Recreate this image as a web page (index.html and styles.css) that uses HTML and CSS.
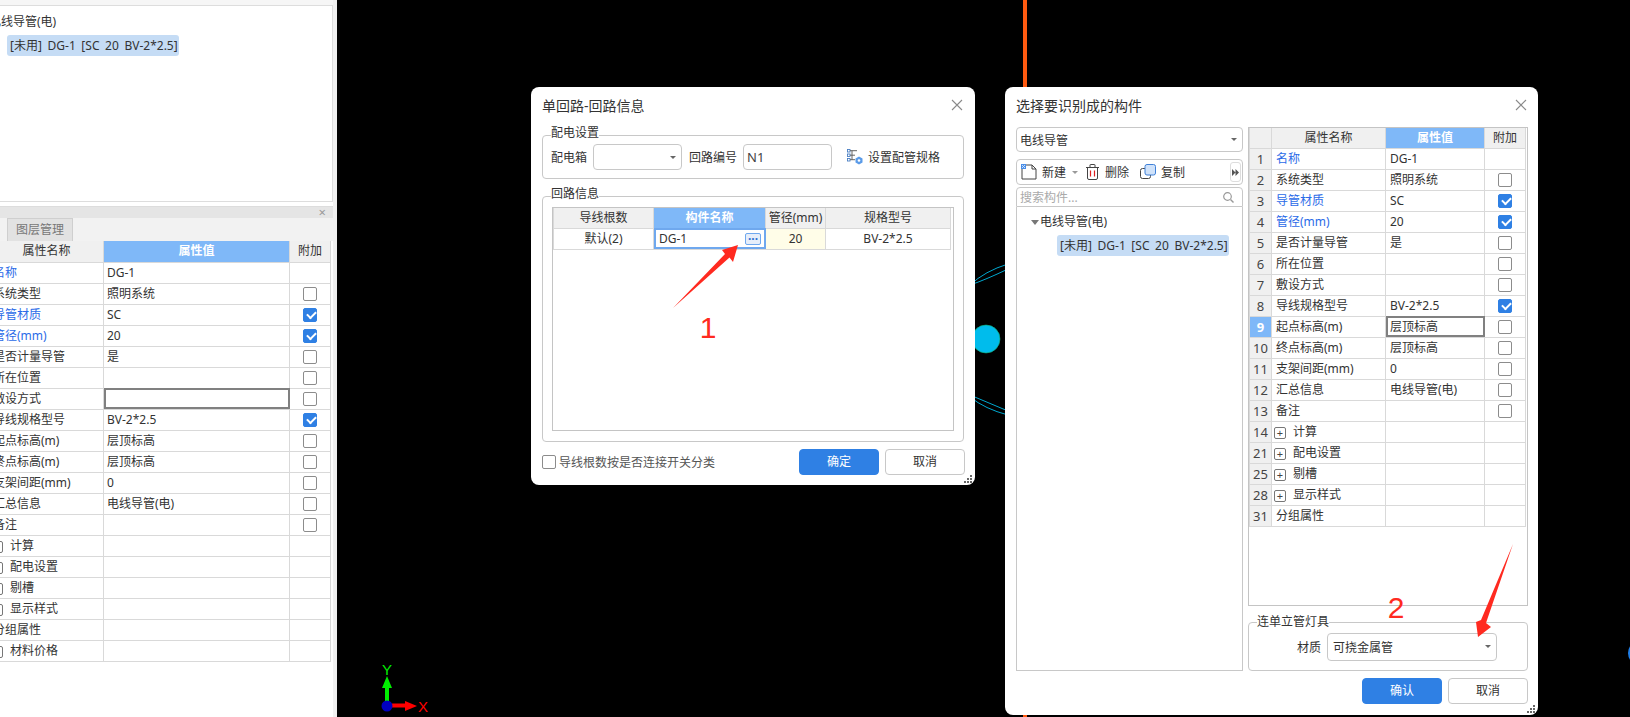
FILE: index.html
```html
<!DOCTYPE html>
<html lang="zh">
<head>
  <meta charset="UTF-8">
  <meta name="viewport" content="width=device-width, initial-scale=1.0">
  <title>单回路-回路信息</title>
  <link rel="stylesheet" href="styles.css">
</head>
<body>
  <!-- 左侧面板 -->
  <div class="side">
    <div class="side-head"><span>构件列表</span></div>
    <div class="side-tree">
      <div class="side-root">电线导管(电)</div>
      <div class="tree-item">[未用] DG-1 [SC 20 BV-2*2.5]</div>
    </div>
    <div class="side-title"><span class="mini-x">×</span></div>
    <div class="side-tabs"><span class="side-tab">图层管理</span></div>
    <table class="prop-table side-table">
      <colgroup><col class="c-num"><col class="c-name"><col class="c-val-wide"><col class="c-add"></colgroup>
      <tr><th></th><th>属性名称</th><th class="th-on">属性值</th><th>附加</th></tr>
      <tr><td></td><td class="link">名称</td><td>DG-1</td><td></td></tr>
      <tr><td></td><td>系统类型</td><td>照明系统</td><td class="mid"><span class="chk"></span></td></tr>
      <tr><td></td><td class="link">导管材质</td><td>SC</td><td class="mid"><span class="chk on"></span></td></tr>
      <tr><td></td><td class="link">管径(mm)</td><td>20</td><td class="mid"><span class="chk on"></span></td></tr>
      <tr><td></td><td>是否计量导管</td><td>是</td><td class="mid"><span class="chk"></span></td></tr>
      <tr><td></td><td>所在位置</td><td></td><td class="mid"><span class="chk"></span></td></tr>
      <tr><td></td><td>敷设方式</td><td class="editing"></td><td class="mid"><span class="chk"></span></td></tr>
      <tr><td></td><td>导线规格型号</td><td>BV-2*2.5</td><td class="mid"><span class="chk on"></span></td></tr>
      <tr><td></td><td>起点标高(m)</td><td>层顶标高</td><td class="mid"><span class="chk"></span></td></tr>
      <tr><td></td><td>终点标高(m)</td><td>层顶标高</td><td class="mid"><span class="chk"></span></td></tr>
      <tr><td></td><td>支架间距(mm)</td><td>0</td><td class="mid"><span class="chk"></span></td></tr>
      <tr><td></td><td>汇总信息</td><td>电线导管(电)</td><td class="mid"><span class="chk"></span></td></tr>
      <tr><td></td><td>备注</td><td></td><td class="mid"><span class="chk"></span></td></tr>
      <tr><td></td><td><span class="plus">+</span>计算</td><td></td><td></td></tr>
      <tr><td></td><td><span class="plus">+</span>配电设置</td><td></td><td></td></tr>
      <tr><td></td><td><span class="plus">+</span>剔槽</td><td></td><td></td></tr>
      <tr><td></td><td><span class="plus">+</span>显示样式</td><td></td><td></td></tr>
      <tr><td></td><td>分组属性</td><td></td><td></td></tr>
      <tr><td></td><td><span class="plus">+</span>材料价格</td><td></td><td></td></tr>
    </table>
    <div class="side-thumb"></div>
  </div>

  <!-- 绘图区 -->
  <svg class="cad" width="1630" height="717" viewBox="0 0 1630 717">
    <rect x="1023" y="0" width="4" height="717" fill="#ff5a10"/>
    <circle cx="986" cy="339" r="14" fill="#00bcec" stroke="#10b070" stroke-width="0.6"/>
    <path d="M970 285 Q985 271 1008 264" class="cad-line"/>
    <path d="M970 285 Q985 280 1008 269" class="cad-line"/>
    <path d="M970 395 L1008 411" class="cad-line"/>
    <path d="M970 397 Q985 409 1008 415" class="cad-line"/>
    <circle cx="1640" cy="653" r="12" fill="#1f7fe8"/>
    <rect x="385" y="687" width="4" height="15" fill="#00ee00"/>
    <polygon points="387,676 392,688 382,688" fill="#00ee00"/>
    <rect x="392" y="703.5" width="14" height="4" fill="#ff0000"/>
    <polygon points="417,706 405,701 405,711" fill="#ff0000"/>
    <circle cx="387" cy="706" r="5.5" fill="#0000c0"/>
    <text x="387" y="675" class="axis axis-y">Y</text>
    <text x="423" y="712" class="axis axis-x">X</text>
  </svg>

  <!-- 单回路对话框 -->
  <div class="dialog dlg-circuit">
    <div class="dlg-title">单回路-回路信息<span class="dlg-close"><svg width="12" height="12" viewBox="0 0 12 12"><path d="M1 1L11 11M11 1L1 11" stroke="#8a8a8a" stroke-width="1.1" fill="none"/></svg></span></div>
    <div class="group group-dist">
      <span class="legend">配电设置</span>
      <span class="lbl">配电箱</span>
      <span class="select select-box"><span></span><i class="caret"></i></span>
      <span class="lbl lbl-no">回路编号</span>
      <span class="input-box">N1</span>
      <span class="spec-link">
        <svg width="16" height="16" viewBox="0 0 16 16">
          <rect x="0.5" y="0.5" width="2.5" height="2.5" fill="none" stroke="#4a7fc4" stroke-width="0.9"/>
          <rect x="0.5" y="5" width="2.5" height="2.5" fill="none" stroke="#4a7fc4" stroke-width="0.9"/>
          <rect x="0.5" y="9.5" width="2.5" height="2.5" fill="none" stroke="#4a7fc4" stroke-width="0.9"/>
          <path d="M3 1.7H10M3 6.2H8M3 10.7H8M5 1.7V10.7" fill="none" stroke="#555" stroke-width="0.9"/>
          <polygon points="12,7.5 15.5,9.5 15.5,13.5 12,15.5 8.5,13.5 8.5,9.5" fill="#5b9be8"/>
          <circle cx="12" cy="11.5" r="1.3" fill="#fff"/>
        </svg>
        设置配管规格
      </span>
    </div>
    <div class="group group-info">
      <span class="legend">回路信息</span>
      <div class="table-box">
        <table class="circuit-table">
          <colgroup><col class="c-wires"><col class="c-comp"><col class="c-dia"><col class="c-spec"></colgroup>
          <tr><th>导线根数</th><th class="th-on">构件名称</th><th>管径(mm)</th><th>规格型号</th></tr>
          <tr>
            <td>默认(2)</td>
            <td class="cell-active"><div class="cell-row">DG-1<span class="more-btn">···</span></div></td>
            <td class="cell-lock">20</td>
            <td>BV-2*2.5</td>
          </tr>
        </table>
      </div>
    </div>
    <div class="dlg-foot">
      <span class="chk-row"><span class="chk"></span>导线根数按是否连接开关分类</span>
      <span class="btn btn-primary">确定</span>
      <span class="btn">取消</span>
    </div>
    <svg class="grip" width="9" height="9" viewBox="0 0 9 9"><path d="M6 0h2v2H6zM3 3h2v2H3zM6 3h2v2H6zM0 6h2v2H0zM3 6h2v2H3zM6 6h2v2H6z" fill="#666"/></svg>
  </div>

  <!-- 选择构件对话框 -->
  <div class="dialog dlg-pick">
    <div class="dlg-title">选择要识别成的构件<span class="dlg-close"><svg width="12" height="12" viewBox="0 0 12 12"><path d="M1 1L11 11M11 1L1 11" stroke="#8a8a8a" stroke-width="1.1" fill="none"/></svg></span></div>
    <div class="pick-body">
      <div class="pick-left">
        <span class="select select-type">电线导管<i class="caret"></i></span>
        <div class="toolbar">
          <span class="tool">
            <svg width="16" height="16" viewBox="0 0 16 16"><path d="M1 5V15H15V5L11 1H4" fill="none" stroke="#444"/><path d="M11 1V5H15" fill="none" stroke="#444"/><rect x="0" y="0" width="5" height="5" fill="#4a8ee8"/><path d="M1 1h1v1H1zM3 1h1v1H3zM2 2h1v1H2zM1 3h1v1H1zM3 3h1v1H3z" fill="#cfe2fa"/></svg>
            新建
          </span>
          <i class="caret caret-new"></i>
          <span class="tool tool-del">
            <svg width="13" height="16" viewBox="0 0 13 16"><path d="M1.5 3.5V14a1.5 1.5 0 0 0 1.5 1.5H10A1.5 1.5 0 0 0 11.5 14V3.5M0 3.5H13M4 3V1a.5.5 0 0 1 .5-.5h4A.5.5 0 0 1 9 1v2" fill="none" stroke="#444"/><path d="M4.5 6.5V12.5M8.5 6.5V12.5" stroke="#e02020" stroke-width="1.2"/></svg>
            删除
          </span>
          <span class="tool tool-copy">
            <svg width="16" height="16" viewBox="0 0 16 16"><rect x="0.5" y="4.5" width="10" height="10" rx="2" fill="#fff" stroke="#444"/><rect x="5" y="0.5" width="10.5" height="10.5" rx="2" fill="#cfe2fa" stroke="#3f80d8"/></svg>
            复制
          </span>
          <span class="tool-more"><svg width="7" height="7" viewBox="0 0 7 7"><path d="M0 0L3.5 3.5L0 7ZM3.5 0L7 3.5L3.5 7Z" fill="#555"/></svg></span>
        </div>
        <div class="search">搜索构件...
          <svg width="11" height="11" viewBox="0 0 11 11"><circle cx="4.5" cy="4.5" r="3.8" fill="none" stroke="#999" stroke-width="1.2"/><path d="M7.5 7.5L10.5 10.5" stroke="#999" stroke-width="1.4"/></svg>
        </div>
        <div class="pick-tree">
          <div class="tree-root"><i class="caret caret-tree"></i>电线导管(电)</div>
          <div class="tree-item">[未用] DG-1 [SC 20 BV-2*2.5]</div>
        </div>
      </div>
      <div class="pick-right">
        <div class="table-box table-box-prop">
          <table class="prop-table">
            <colgroup><col class="c-num"><col class="c-name"><col class="c-val"><col class="c-add"></colgroup>
            <tr><th></th><th>属性名称</th><th class="th-on">属性值</th><th>附加</th></tr>
            <tr><td class="num">1</td><td class="link">名称</td><td>DG-1</td><td></td></tr>
            <tr><td class="num">2</td><td>系统类型</td><td>照明系统</td><td class="mid"><span class="chk"></span></td></tr>
            <tr><td class="num">3</td><td class="link">导管材质</td><td>SC</td><td class="mid"><span class="chk on"></span></td></tr>
            <tr><td class="num">4</td><td class="link">管径(mm)</td><td>20</td><td class="mid"><span class="chk on"></span></td></tr>
            <tr><td class="num">5</td><td>是否计量导管</td><td>是</td><td class="mid"><span class="chk"></span></td></tr>
            <tr><td class="num">6</td><td>所在位置</td><td></td><td class="mid"><span class="chk"></span></td></tr>
            <tr><td class="num">7</td><td>敷设方式</td><td></td><td class="mid"><span class="chk"></span></td></tr>
            <tr><td class="num">8</td><td>导线规格型号</td><td>BV-2*2.5</td><td class="mid"><span class="chk on"></span></td></tr>
            <tr><td class="num num-on">9</td><td>起点标高(m)</td><td class="editing">层顶标高</td><td class="mid"><span class="chk"></span></td></tr>
            <tr><td class="num">10</td><td>终点标高(m)</td><td>层顶标高</td><td class="mid"><span class="chk"></span></td></tr>
            <tr><td class="num">11</td><td>支架间距(mm)</td><td>0</td><td class="mid"><span class="chk"></span></td></tr>
            <tr><td class="num">12</td><td>汇总信息</td><td>电线导管(电)</td><td class="mid"><span class="chk"></span></td></tr>
            <tr><td class="num">13</td><td>备注</td><td></td><td class="mid"><span class="chk"></span></td></tr>
            <tr><td class="num">14</td><td><span class="plus">+</span>计算</td><td></td><td></td></tr>
            <tr><td class="num">21</td><td><span class="plus">+</span>配电设置</td><td></td><td></td></tr>
            <tr><td class="num">25</td><td><span class="plus">+</span>剔槽</td><td></td><td></td></tr>
            <tr><td class="num">28</td><td><span class="plus">+</span>显示样式</td><td></td><td></td></tr>
            <tr><td class="num">31</td><td>分组属性</td><td></td><td></td></tr>
          </table>
        </div>
        <div class="group group-lamp">
          <span class="legend">连单立管灯具</span>
          <span class="lbl">材质</span>
          <span class="select select-mat">可挠金属管<i class="caret"></i></span>
        </div>
      </div>
    </div>
    <div class="dlg-foot dlg-foot-right">
      <span class="btn btn-primary">确认</span>
      <span class="btn">取消</span>
    </div>
    <svg class="grip" width="9" height="9" viewBox="0 0 9 9"><path d="M6 0h2v2H6zM3 3h2v2H3zM6 3h2v2H6zM0 6h2v2H0zM3 6h2v2H3zM6 6h2v2H6z" fill="#666"/></svg>
  </div>

  <!-- 红色标注 -->
  <svg class="marks" width="1630" height="717" viewBox="0 0 1630 717">
    <polygon points="673,308 725,254 722,250 738,245 733,262 729.5,257.5" fill="#ff2a20"/>
    <polygon points="1513,544 1481,620 1476,622 1478,637 1491,627 1486,623" fill="#ff2a20"/>
    <text x="708" y="338" class="mark-no">1</text>
    <text x="1396" y="618" class="mark-no">2</text>
  </svg>
</body>
</html>
```

FILE: styles.css
```css
* {
  box-sizing: border-box;
}

html, body {
  margin: 0;
  padding: 0;
}

body {
  position: relative;
  width: 1630px;
  height: 717px;
  overflow: hidden;
  background-color: #000;
  color: #333;
  font-family: "Noto Sans", "Noto Sans CJK SC", sans-serif;
  font-size: 12px;
}

/* left panel */
.side {
  position: relative;
  z-index: 2;
  width: 337px;
  height: 717px;
  overflow: hidden;
  background-color: #fff;
  border-right: 4px solid #f1f1f1;
}

.side-head {
  height: 5px;
  overflow: hidden;
  background-color: #f6f6f6;
  color: #666;
  line-height: 16px;
}

.side-head span {
  display: block;
  margin-top: -13px;
}

.side-tree {
  height: 197px;
  padding: 6px 0 0 7px;
  background-color: #fff;
  border: 1px solid #ddd;
  border-left: 0;
}

.side-root {
  height: 20px;
  margin-left: -18px;
  line-height: 20px;
}

.tree-item {
  width: 172px;
  height: 21px;
  padding-left: 3px;
  border-radius: 3px;
  background-color: #c5dcf5;
  line-height: 21px;
  white-space: nowrap;
  word-spacing: 2.5px;
}

.side-tree .tree-item {
  margin-top: 3px;
}

.side-title {
  height: 12px;
  margin-top: 4px;
  padding-right: 7px;
  background-color: #e5e5e5;
  border-top: 1px solid #ddd;
  color: #999;
  line-height: 10px;
  text-align: right;
}

.mini-x {
  font-size: 13px;
}

.side-tabs {
  height: 23px;
  padding-left: 7px;
  background-color: #f2f2f2;
}

.side-tab {
  display: block;
  width: 66px;
  height: 23px;
  background-color: #e2e2e2;
  border: 1px solid #cfcfcf;
  border-bottom: 0;
  color: #777;
  line-height: 22px;
  text-align: center;
}

.side-thumb {
  position: absolute;
  top: 291px;
  right: -4px;
  width: 4px;
  height: 100px;
  background-color: #6c7278;
}

/* property tables */
.prop-table,
.circuit-table {
  border-collapse: collapse;
  table-layout: fixed;
}

.side-table {
  width: 363px;
  margin-left: -33px;
}

.c-num { width: 22px; }
.c-name { width: 114px; }
.c-val { width: 99px; }
.c-val-wide { width: 186px; }
.c-add { width: 41px; }

.prop-table th,
.prop-table td,
.circuit-table th,
.circuit-table td {
  height: 21px;
  padding: 0 4px;
  border: 1px solid #d9d9d9;
  font-weight: normal;
  line-height: 16px;
  white-space: nowrap;
}

.prop-table th,
.circuit-table th {
  height: 20px;
  background-color: #f0f0f0;
  text-align: center;
}

.side-table th {
  height: 21px;
}

.prop-table.side-table td {
  padding-left: 3px;
}

.prop-table tr:first-child th,
.circuit-table tr:first-child th {
  border-top: 0;
}

.prop-table .th-on,
.circuit-table .th-on {
  background-color: #7fb8f8;
  color: #fff;
  font-weight: 700;
}

.link {
  color: #2b6be8;
}

.prop-table td.mid,
.prop-table.side-table td.mid {
  padding: 0;
  line-height: 0;
  text-align: center;
}

.num {
  background-color: #f0f0f0;
  color: #444;
  font-size: 13px;
  text-align: center;
}

.prop-table .num {
  padding: 0;
}

.prop-table .num-on {
  background-color: #7fb8f8;
  color: #fff;
  font-weight: 700;
}

.prop-table .editing {
  outline: 2px solid #808080;
  outline-offset: -2px;
}

.chk {
  display: inline-block;
  position: relative;
  width: 14px;
  height: 14px;
  background-color: #fff;
  border: 1px solid #8c8c8c;
  border-radius: 2px;
  vertical-align: middle;
}

.chk.on {
  background-color: #2f80e4;
  border-color: #2f80e4;
}

.chk.on::after {
  content: "";
  position: absolute;
  left: 3px;
  top: 2px;
  width: 7px;
  height: 4px;
  border-left: 2px solid #fff;
  border-bottom: 2px solid #fff;
  transform: rotate(-45deg);
}

.plus {
  display: inline-block;
  width: 12px;
  height: 12px;
  margin: 0 7px 0 -2px;
  border: 1px solid #777;
  border-radius: 2px;
  color: #444;
  font-size: 11px;
  line-height: 10px;
  text-align: center;
  vertical-align: -1px;
}

/* canvas */
.cad,
.marks {
  position: absolute;
  left: 0;
  top: 0;
}

.marks {
  z-index: 5;
  pointer-events: none;
}

.cad-line {
  fill: none;
  stroke: #00a8d0;
  stroke-width: 1;
}

.axis {
  font-family: "Liberation Sans", sans-serif;
  font-size: 15px;
  text-anchor: middle;
}

.axis-y { fill: #00ee00; }
.axis-x { fill: #ff0000; }

.mark-no {
  fill: #ff2a20;
  font-family: "Liberation Sans", sans-serif;
  font-size: 30px;
  text-anchor: middle;
}

/* dialogs */
.dialog {
  position: absolute;
  z-index: 3;
  display: flex;
  flex-direction: column;
  padding: 0 11px;
  background-color: #fff;
  border-radius: 8px;
}

.dlg-circuit {
  left: 531px;
  top: 87px;
  width: 444px;
  height: 398px;
}

.dlg-pick {
  left: 1005px;
  top: 87px;
  width: 533px;
  height: 628px;
  padding-right: 10px;
}

.dlg-title {
  display: flex;
  flex-shrink: 0;
  justify-content: space-between;
  align-items: center;
  height: 36px;
  font-size: 14px;
}

.dlg-circuit .dlg-title {
  margin-bottom: 12px;
}

.dlg-pick .dlg-title {
  margin-bottom: 4px;
}

.dlg-close {
  display: flex;
  margin-right: 1px;
}

.group {
  position: relative;
  flex-shrink: 0;
  border: 1px solid #c8c8c8;
  border-radius: 4px;
}

.legend {
  position: absolute;
  left: 8px;
  top: -11px;
  background-color: #fff;
  color: #333;
  line-height: 16px;
}

.group-dist {
  display: flex;
  align-items: center;
  gap: 6px;
  height: 44px;
  padding: 0 8px;
}

.lbl-no {
  margin-left: 1px;
}

.group-info {
  height: 246px;
  margin-top: 17px;
  padding: 10px 9px;
}

.table-box {
  height: 100%;
  border: 1px solid #c4c4c4;
  overflow: hidden;
}

.circuit-table {
  width: 397px;
}

.c-wires { width: 100px; }
.c-comp { width: 112px; }
.c-dia { width: 60px; }
.c-spec { width: 125px; }

.circuit-table td {
  text-align: center;
}

.circuit-table th {
  padding: 0;
}

.circuit-table .cell-active {
  padding: 0 4px 0 5px;
  outline: 2px solid #6fa8ee;
  outline-offset: -2px;
  text-align: left;
}

.cell-row {
  display: flex;
  justify-content: space-between;
  align-items: center;
}

.more-btn {
  width: 16px;
  height: 12px;
  background-color: #e6eefa;
  border: 1px solid #6fa8ee;
  border-radius: 2px;
  color: #2f6fd0;
  font-size: 12px;
  font-weight: 700;
  line-height: 9px;
  text-align: center;
}

.cell-lock {
  background-color: #fffde8;
}

.select,
.input-box {
  display: flex;
  align-items: center;
  justify-content: space-between;
  flex-shrink: 0;
  padding: 0 5px 0 3px;
  background-color: #fff;
  border: 1px solid #c8c8c8;
  border-radius: 4px;
}

.select-box {
  width: 89px;
  height: 26px;
  padding-right: 5px;
}

.input-box {
  width: 89px;
  height: 26px;
  font-size: 13px;
  color: #444;
}

.caret {
  display: inline-block;
  width: 0;
  height: 0;
  border-left: 3px solid transparent;
  border-right: 3px solid transparent;
  border-top: 3px solid #666;
}

.spec-link {
  display: flex;
  align-items: center;
  gap: 5px;
  margin-left: 9px;
}

.dlg-foot {
  display: flex;
  align-items: center;
  gap: 6px;
  margin-top: 7px;
}

.dlg-circuit .dlg-foot {
  margin-right: -1px;
}

.dlg-foot-right {
  justify-content: flex-end;
}

.chk-row {
  display: flex;
  flex: 1;
  align-items: center;
  gap: 3px;
  color: #555;
}

.btn {
  width: 80px;
  height: 26px;
  background-color: #fff;
  border: 1px solid #c8c8c8;
  border-radius: 4px;
  line-height: 24px;
  text-align: center;
}

.btn-primary {
  background-color: #2f80e4;
  border-color: #2f80e4;
  color: #fff;
}

.grip {
  position: absolute;
  right: 2px;
  bottom: 1px;
}

/* pick dialog */
.pick-body {
  display: flex;
  gap: 5px;
  height: 544px;
  flex-shrink: 0;
}

.pick-left {
  display: flex;
  flex-direction: column;
  width: 227px;
}

.pick-right {
  display: flex;
  flex-direction: column;
  width: 280px;
}

.select-type {
  height: 25px;
  padding: 0 5px 0 3px;
}

.toolbar {
  display: flex;
  align-items: center;
  height: 26px;
  margin-top: 7px;
  padding-left: 4px;
  border: 1px solid #c8c8c8;
  border-radius: 4px;
}

.tool {
  display: flex;
  align-items: center;
  gap: 5px;
}

.caret-new {
  margin: 0 0 0 6px;
  border-top-color: #999;
}

.tool-del {
  gap: 6px;
  margin-left: 8px;
}

.tool-copy {
  margin-left: 11px;
}

.tool-more {
  display: flex;
  justify-content: center;
  align-items: center;
  width: 11px;
  height: 20px;
  margin-left: auto;
  margin-right: 1px;
  border: 1px solid #ddd;
  border-radius: 3px;
}

.search {
  display: flex;
  justify-content: space-between;
  align-items: center;
  height: 20px;
  margin-top: 2px;
  padding: 0 8px 0 3px;
  border: 1px solid #c8c8c8;
  border-radius: 4px 4px 0 0;
  color: #aaa;
}

.pick-tree {
  flex: 1;
  padding: 4px 0 0 40px;
  border: 1px solid #c8c8c8;
  border-top: 0;
}

.tree-root {
  position: relative;
  height: 21px;
  margin: 0 0 3px -17px;
  line-height: 21px;
}

.caret-tree {
  position: absolute;
  left: -9px;
  top: 9px;
  border-left-width: 4px;
  border-right-width: 4px;
  border-top-width: 5px;
  border-top-color: #777;
}

.table-box-prop {
  flex: none;
  height: 479px;
  padding-left: 0;
}

.table-box-prop .prop-table {
  width: 276px;
}

.group-lamp {
  display: flex;
  align-items: center;
  height: 49px;
  margin-top: 16px;
  padding-left: 48px;
}

.group-lamp .legend {
  top: -9px;
}

.select-mat {
  width: 170px;
  height: 28px;
  margin-left: 6px;
  padding-left: 5px;
}
```
